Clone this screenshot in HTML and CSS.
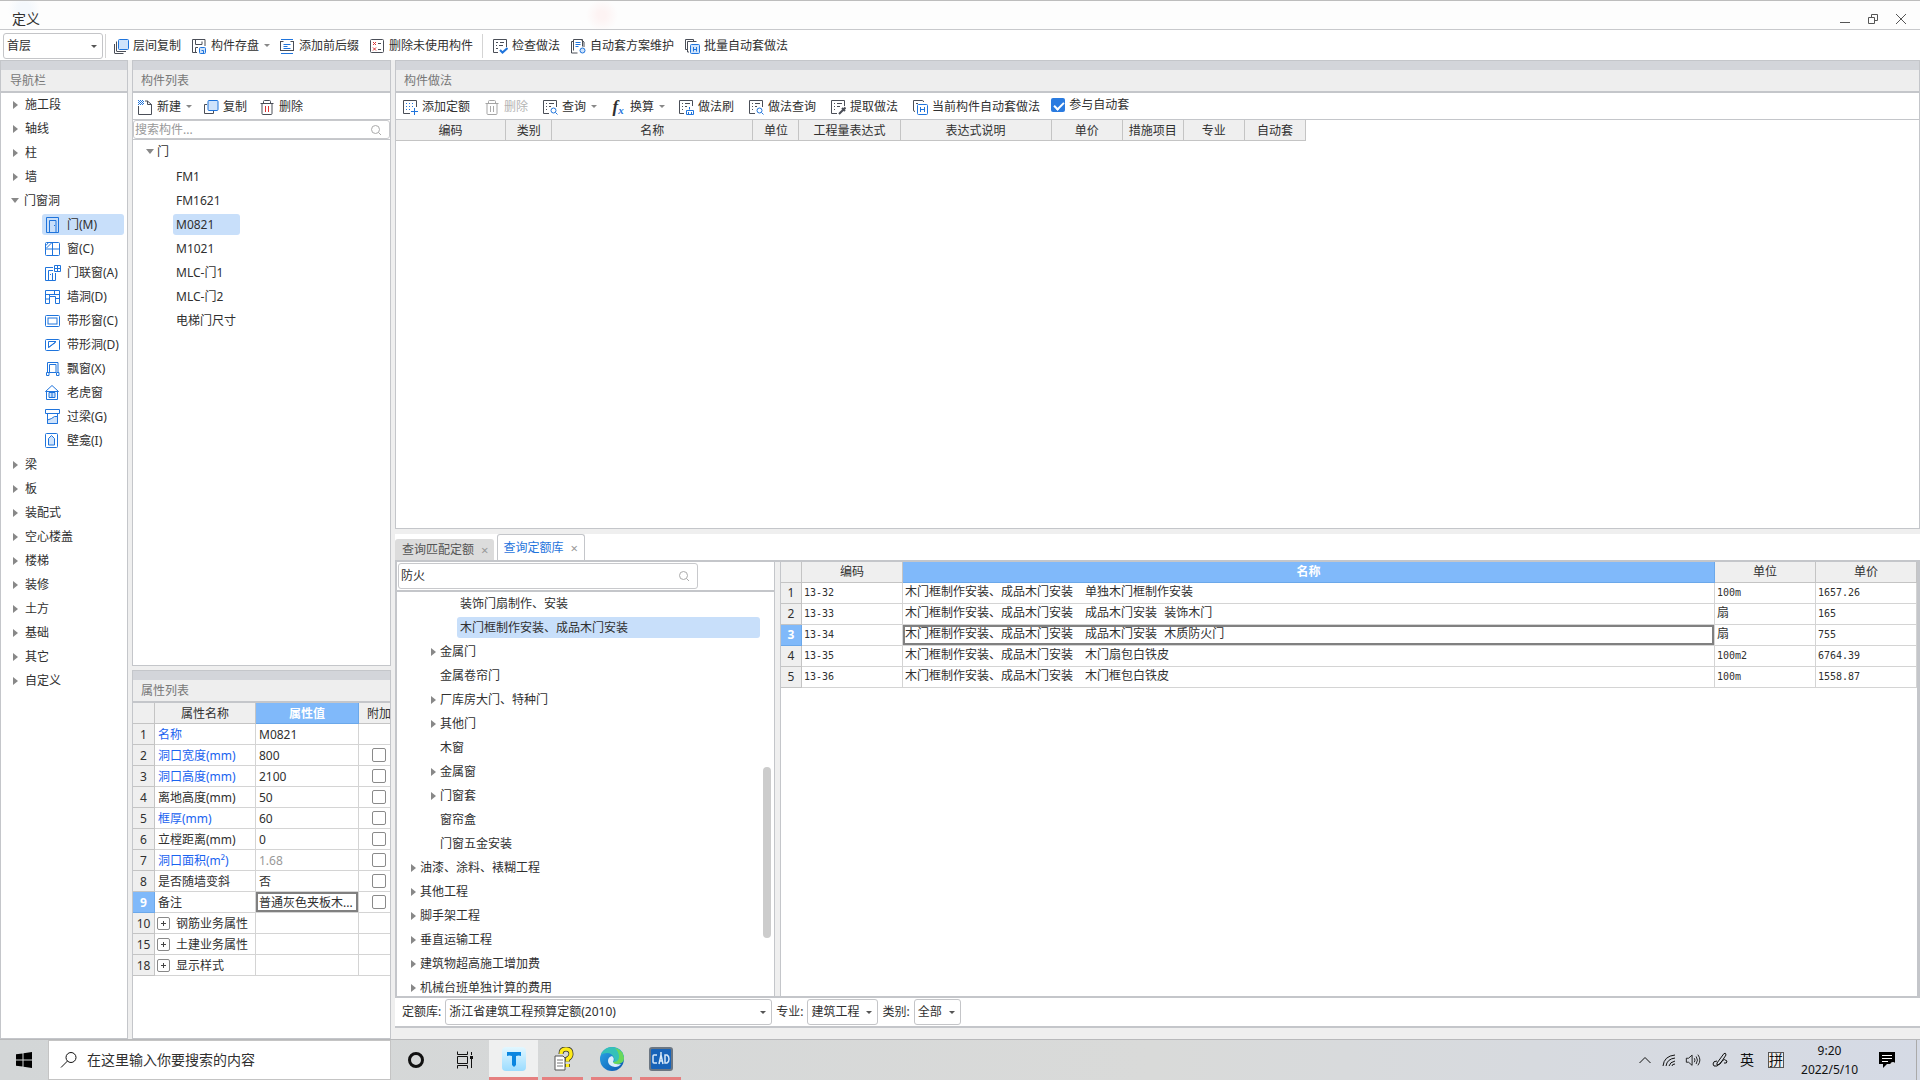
FILE: index.html
```html
<!DOCTYPE html>
<html lang="zh-CN">
<head>
<meta charset="utf-8">
<title>定义</title>
<link rel="stylesheet" href="styles.css">
</head>
<body>
<svg class="sprite" aria-hidden="true">
  <symbol id="i-copy-floor" viewBox="0 0 16 16"><rect class="b f" x="5.5" y="1.5" width="10" height="10" rx="1"/><path class="d" d="M3.5 3.5v9.500q0 .5.5.5h9M1.500 6v9q0 .5.5.5h8.500"/></symbol>
  <symbol id="i-save" viewBox="0 0 16 16"><path class="d" d="M6 14.500H1.500v-13h12.500V8M4.500 1.500v5h6.500v-3M4.500 14V9.500H7"/><rect class="b f" x="8.500" y="9.500" width="6" height="6" rx="1"/><path class="b" d="M10.500 12.500h2v3"/></symbol>
  <symbol id="i-affix" viewBox="0 0 16 16"><path class="d" d="M1.500 3v10M14.500 3v10M1.500 3.500h3M11.500 3.500h3M1.500 12.500h13"/><path class="b" d="M2 1.500h12M2 15.500h12M4.500 6.500h7M4.500 8.500h4M4.500 10.500h7"/></symbol>
  <symbol id="i-unused" viewBox="0 0 16 16"><rect class="d" x="1.500" y="1.500" width="13" height="13" rx="1"/><path class="r" d="M4 4l3 3M7 4L4 7M4 9.500l3 3M7 9.500l-3 3"/><path class="d" d="M9 5.500h3M9 11.500h3"/></symbol>
  <symbol id="i-check" viewBox="0 0 16 16"><path class="d" d="M6 14.500H1.500v-13h13V9M4 4.500h2M8 4.500h4M4 7.500h1M7 7.500h4M4 10.500h2"/><path class="b w" d="M8 12l2.500 2.500L15.500 10"/></symbol>
  <symbol id="i-auto" viewBox="0 0 16 16"><path class="d" d="M3.500 12.500v-11h9v7M3.500 3.500h-2v11.500h6M11 1.500l3 2.500v5"/><path class="b" d="M5.500 4.500h5M5.500 6.500h5M5.500 8.500h3"/><circle class="b f" cx="12.500" cy="12.500" r="2.500"/></symbol>
  <symbol id="i-batch" viewBox="0 0 16 16"><path class="d" d="M3 11.500H1.500v-10h8V3M5 14H3.500V3.500h9"/><rect class="b f" x="6.500" y="6.500" width="9" height="9" rx="1"/><path class="b" d="M9.500 9v4.500M12.500 9v4.500M9.500 11.500h3"/></symbol>
  <symbol id="i-new" viewBox="0 0 16 16"><path class="d" d="M1.500 7v8.500h13V5.500L10.500 2H8M10.500 2v3.500h4"/><path class="b" stroke-dasharray="1 1" d="M1 1.500h5M2 2.500h5M1 3.500h5M2 4.500h5M1 5.500h5"/></symbol>
  <symbol id="i-copy" viewBox="0 0 16 16"><path class="d" d="M4 5.500H1.500v9h9V12"/><rect class="b f" x="5" y="1.500" width="10" height="10" rx="1"/></symbol>
  <symbol id="i-trash" viewBox="0 0 16 16"><path class="d" d="M1.500 4.500h13M4.500 4V2.500q0-1 1-1h5q1 0 1 1V4M3 5v9.500q0 1 1 1h8q1 0 1-1V5"/><path class="r t" d="M6.500 7v6M9.500 7v6"/></symbol>
  <symbol id="i-add" viewBox="0 0 16 16"><path class="d" d="M8 14.500H1.500v-13h13V8"/><path class="b" stroke-dasharray="1 2" d="M4 4.500h8M4 7.500h8M4 10.500h4"/><path class="b" d="M12.500 9v7M9 12.500h7"/></symbol>
  <symbol id="i-query" viewBox="0 0 16 16"><path class="d" d="M7 14.500H1.500v-13h13V8M4 4.500h1M7 4.500h5M4 7.500h1M7 7.500h2M4 10.500h1"/><circle class="b" cx="11.500" cy="11.500" r="2.500"/><path class="b" d="M13.500 13.500l2 2"/></symbol>
  <symbol id="i-brush" viewBox="0 0 16 16"><path class="d" d="M6 14.500H1.500v-13h13V7M4 4.500h1M7 4.500h5M4 7.500h1M7 7.500h2M4 10.500h1"/><path class="b" d="M11.500 8v2.500M8.500 11.500h7v4h-7zM10.500 13v2M13.500 13v2"/></symbol>
  <symbol id="i-extract" viewBox="0 0 16 16"><path class="d" d="M7 14.500H1.500v-13h13V7M4 4.500h1M7 4.500h5M4 7.500h1M7 7.500h3M4 10.500h1"/><path class="d w" d="M9 15l4-4M12 9l3 3M13 11l2.500-2.500"/></symbol>
  <symbol id="i-current" viewBox="0 0 16 16"><path class="d" d="M3 12.500q-1.500 0-1.500-1.500V1.500h9q1 0 1 1.500M4 4.500h2"/><rect class="b" x="5.500" y="5.500" width="10" height="10" rx="1"/><path class="b" d="M8.500 8v5M12.500 8v5M8.500 10.500h4"/></symbol>
  <symbol id="i-search" viewBox="0 0 12 12"><circle cx="5.500" cy="5.500" r="4"/><path d="M8.500 8.500l2.500 2.500"/></symbol>
  <symbol id="n-door" viewBox="0 0 16 16"><path class="b" d="M1.500 15.500v-15h12v15zM4.500 15V3.500h6.500V15"/><path class="b" d="M9 8.500h1"/></symbol>
  <symbol id="n-window" viewBox="0 0 16 16"><rect class="b" x=".5" y="1.500" width="14" height="13" rx="1"/><path class="b" d="M7.500 1.500v13M.5 8h14M1.500 7l5-5M1 4.500l2.500-3"/></symbol>
  <symbol id="n-doorwin" viewBox="0 0 16 16"><path class="b" d="M8 2.500H.5v13h10V8M3.500 15V5.500H8M7.500 15V8M5 9.500h1M9.500.5h6v6h-6zM12.500.5v6M9.500 3.500h6"/></symbol>
  <symbol id="n-hole" viewBox="0 0 16 16"><path class="b" d="M.5 14.500v-13h14v13h-4v-7h-6v7zM.5 5.500h14M9.500 1.500v4M.5 10h4M10.500 9.500h4M4.500 5.500v2"/></symbol>
  <symbol id="n-strip" viewBox="0 0 16 16"><rect class="b" x=".5" y="2.500" width="14" height="11" rx="1"/><rect class="b" x="3" y="5" width="9" height="6"/></symbol>
  <symbol id="n-striphole" viewBox="0 0 16 16"><rect class="b" x=".5" y="2.500" width="14" height="11" rx="1"/><path class="b" d="M3.500 10.500v-6H11zM3.500 10.500l7-5"/></symbol>
  <symbol id="n-bay" viewBox="0 0 16 16"><path class="b" d="M2.500 11.500v-10h10.500v10M4.500 11V3.500h6.500V11M1.500 11.500h2.500v3H1.500zM11.500 11.500h2.500v3h-2.500zM4 11.500h7"/></symbol>
  <symbol id="n-dormer" viewBox="0 0 16 16"><path class="b" d="M.5 6.500L7 .5l6.500 6zM1.500 7v7.500h11V7"/><path class="b f" d="M4 7.500h6v5H4zM7 7.500v5"/></symbol>
  <symbol id="n-lintel" viewBox="0 0 16 16"><path class="b" d="M.5.5h14v4H.5zM2.500 4.500v10h10v-10"/><path class="b f" d="M2.500 11q4-1 7-3.500h3v7h-10z"/></symbol>
  <symbol id="n-niche" viewBox="0 0 16 16"><rect class="b" x=".5" y=".5" width="12" height="14" rx="1"/><path class="b f" d="M3.500 12V5.500l3-3 3 3V12z"/></symbol>
</svg>

<header class="titlebar">
  <h1>定义</h1>
  <div class="winbtns">
    <button aria-label="最小化"><svg viewBox="0 0 12 12"><path d="M1 9.500h10"/></svg></button>
    <button aria-label="还原"><svg viewBox="0 0 12 12"><path d="M1.500 4.500h6v6h-6zM4.500 4V1.500h6v6H8"/></svg></button>
    <button aria-label="关闭"><svg viewBox="0 0 12 12"><path d="M1 1l10 10M11 1L1 11"/></svg></button>
  </div>
</header>

<div class="toolbar main-tools">
  <span class="combo floor"><select aria-label="楼层"><option>首层</option></select></span>
  <i class="sep"></i>
  <button class="tool"><svg><use href="#i-copy-floor"/></svg>层间复制</button>
  <button class="tool drop"><svg><use href="#i-save"/></svg>构件存盘</button>
  <button class="tool"><svg><use href="#i-affix"/></svg>添加前后缀</button>
  <button class="tool"><svg><use href="#i-unused"/></svg>删除未使用构件</button>
  <i class="sep"></i>
  <button class="tool"><svg><use href="#i-check"/></svg>检查做法</button>
  <button class="tool"><svg><use href="#i-auto"/></svg>自动套方案维护</button>
  <button class="tool"><svg><use href="#i-batch"/></svg>批量自动套做法</button>
</div>

<main class="workspace">
  <nav class="panel nav">
    <h2>导航栏</h2>
    <ul class="tree">
      <li class="shut">施工段</li>
      <li class="shut">轴线</li>
      <li class="shut">柱</li>
      <li class="shut">墙</li>
      <li class="open">门窗洞
        <ul>
          <li class="on"><svg><use href="#n-door"/></svg>门(M)</li>
          <li><svg><use href="#n-window"/></svg>窗(C)</li>
          <li><svg><use href="#n-doorwin"/></svg>门联窗(A)</li>
          <li><svg><use href="#n-hole"/></svg>墙洞(D)</li>
          <li><svg><use href="#n-strip"/></svg>带形窗(C)</li>
          <li><svg><use href="#n-striphole"/></svg>带形洞(D)</li>
          <li><svg><use href="#n-bay"/></svg>飘窗(X)</li>
          <li><svg><use href="#n-dormer"/></svg>老虎窗</li>
          <li><svg><use href="#n-lintel"/></svg>过梁(G)</li>
          <li><svg><use href="#n-niche"/></svg>壁龛(I)</li>
        </ul>
      </li>
      <li class="shut">梁</li>
      <li class="shut">板</li>
      <li class="shut">装配式</li>
      <li class="shut">空心楼盖</li>
      <li class="shut">楼梯</li>
      <li class="shut">装修</li>
      <li class="shut">土方</li>
      <li class="shut">基础</li>
      <li class="shut">其它</li>
      <li class="shut">自定义</li>
    </ul>
  </nav>

  <div class="middle">
    <section class="panel components">
      <h2>构件列表</h2>
      <div class="toolbar list-tools">
        <button class="tool drop"><svg><use href="#i-new"/></svg>新建</button>
        <button class="tool"><svg><use href="#i-copy"/></svg>复制</button>
        <button class="tool"><svg><use href="#i-trash"/></svg>删除</button>
      </div>
      <label class="search"><input type="text" placeholder="搜索构件..." aria-label="搜索构件"><svg><use href="#i-search"/></svg></label>
      <ul class="tree">
        <li class="open">门
          <ul>
            <li><span>FM1</span></li>
            <li><span>FM1621</span></li>
            <li><span class="on">M0821</span></li>
            <li><span>M1021</span></li>
            <li><span>MLC-门1</span></li>
            <li><span>MLC-门2</span></li>
            <li><span>电梯门尺寸</span></li>
          </ul>
        </li>
      </ul>
    </section>

    <section class="panel properties">
      <h2>属性列表</h2>
      <div class="clip">
      <table class="grid props">
        <colgroup><col class="c-num"><col class="c-name"><col class="c-val"><col class="c-add"></colgroup>
        <thead><tr><th></th><th>属性名称</th><th class="hot">属性值</th><th>附加</th></tr></thead>
        <tbody>
          <tr><th>1</th><td class="key">名称</td><td>M0821</td><td></td></tr>
          <tr><th>2</th><td class="key">洞口宽度(mm)</td><td>800</td><td><input type="checkbox" aria-label="附加 洞口宽度"></td></tr>
          <tr><th>3</th><td class="key">洞口高度(mm)</td><td>2100</td><td><input type="checkbox" aria-label="附加 洞口高度"></td></tr>
          <tr><th>4</th><td>离地高度(mm)</td><td>50</td><td><input type="checkbox" aria-label="附加 离地高度"></td></tr>
          <tr><th>5</th><td class="key">框厚(mm)</td><td>60</td><td><input type="checkbox" aria-label="附加 框厚"></td></tr>
          <tr><th>6</th><td>立樘距离(mm)</td><td>0</td><td><input type="checkbox" aria-label="附加 立樘距离"></td></tr>
          <tr><th>7</th><td class="key">洞口面积(m²)</td><td class="mute">1.68</td><td><input type="checkbox" aria-label="附加 洞口面积"></td></tr>
          <tr><th>8</th><td>是否随墙变斜</td><td>否</td><td><input type="checkbox" aria-label="附加 是否随墙变斜"></td></tr>
          <tr><th class="hot">9</th><td>备注</td><td class="focus">普通灰色夹板木...</td><td><input type="checkbox" aria-label="附加 备注"></td></tr>
          <tr><th>10</th><td><button class="plus" aria-label="展开"></button>钢筋业务属性</td><td></td><td></td></tr>
          <tr><th>15</th><td><button class="plus" aria-label="展开"></button>土建业务属性</td><td></td><td></td></tr>
          <tr><th>18</th><td><button class="plus" aria-label="展开"></button>显示样式</td><td></td><td></td></tr>
        </tbody>
      </table>
      </div>
    </section>
  </div>

  <div class="right">
    <section class="panel methods">
      <h2>构件做法</h2>
      <div class="toolbar method-tools">
        <button class="tool"><svg><use href="#i-add"/></svg>添加定额</button>
        <button class="tool" disabled><svg><use href="#i-trash"/></svg>删除</button>
        <button class="tool drop"><svg><use href="#i-query"/></svg>查询</button>
        <button class="tool drop"><span class="fx">f<sub>x</sub></span>换算</button>
        <button class="tool"><svg><use href="#i-brush"/></svg>做法刷</button>
        <button class="tool"><svg><use href="#i-query"/></svg>做法查询</button>
        <button class="tool"><svg><use href="#i-extract"/></svg>提取做法</button>
        <button class="tool"><svg><use href="#i-current"/></svg>当前构件自动套做法</button>
        <label class="join"><input type="checkbox" checked>参与自动套</label>
      </div>
      <table class="grid methods-grid">
        <colgroup><col class="m1"><col class="m2"><col class="m3"><col class="m2"><col class="m4"><col class="m5"><col class="m6"><col class="m7"><col class="m7"><col class="m7"></colgroup>
        <thead><tr><th>编码</th><th>类别</th><th>名称</th><th>单位</th><th>工程量表达式</th><th>表达式说明</th><th>单价</th><th>措施项目</th><th>专业</th><th>自动套</th></tr></thead>
      </table>
    </section>

    <section class="query">
      <div class="tabs">
        <button class="tab">查询匹配定额<b>×</b></button>
        <button class="tab active">查询定额库<b>×</b></button>
      </div>
      <div class="query-body">
        <div class="library">
          <div class="library-search"><label class="search"><input type="text" value="防火" aria-label="搜索定额"><svg><use href="#i-search"/></svg></label></div>
          <div class="library-tree">
            <ul class="tree">
              <li class="l3">装饰门扇制作、安装</li>
              <li class="l3 on">木门框制作安装、成品木门安装</li>
              <li class="l2 shut">金属门</li>
              <li class="l2">金属卷帘门</li>
              <li class="l2 shut">厂库房大门、特种门</li>
              <li class="l2 shut">其他门</li>
              <li class="l2">木窗</li>
              <li class="l2 shut">金属窗</li>
              <li class="l2 shut">门窗套</li>
              <li class="l2">窗帘盒</li>
              <li class="l2">门窗五金安装</li>
              <li class="l1 shut">油漆、涂料、裱糊工程</li>
              <li class="l1 shut">其他工程</li>
              <li class="l1 shut">脚手架工程</li>
              <li class="l1 shut">垂直运输工程</li>
              <li class="l1 shut">建筑物超高施工增加费</li>
              <li class="l1 shut">机械台班单独计算的费用</li>
            </ul>
            <div class="scroll"><i></i></div>
          </div>
        </div>
        <div class="results">
          <table class="grid results-grid">
            <colgroup><col class="q1"><col class="q2"><col><col class="q2"><col class="q2"></colgroup>
            <thead><tr><th></th><th>编码</th><th class="hot">名称</th><th>单位</th><th>单价</th></tr></thead>
            <tbody>
              <tr><th>1</th><td>13-32</td><td class="cn">木门框制作安装、成品木门安装　单独木门框制作安装</td><td>100m</td><td>1657.26</td></tr>
              <tr><th>2</th><td>13-33</td><td class="cn">木门框制作安装、成品木门安装　成品木门安装 装饰木门</td><td class="cn">扇</td><td>165</td></tr>
              <tr><th class="hot">3</th><td>13-34</td><td class="cn focus">木门框制作安装、成品木门安装　成品木门安装 木质防火门</td><td class="cn">扇</td><td>755</td></tr>
              <tr><th>4</th><td>13-35</td><td class="cn">木门框制作安装、成品木门安装　木门扇包白铁皮</td><td>100m2</td><td>6764.39</td></tr>
              <tr><th>5</th><td>13-36</td><td class="cn">木门框制作安装、成品木门安装　木门框包白铁皮</td><td>100m</td><td>1558.87</td></tr>
            </tbody>
          </table>
        </div>
      </div>
      <div class="filters">
        <label for="lib">定额库:</label><span class="combo lib"><select id="lib"><option>浙江省建筑工程预算定额(2010)</option></select></span>
        <label for="major">专业:</label><span class="combo major"><select id="major"><option>建筑工程</option></select></span>
        <label for="kind">类别:</label><span class="combo kind"><select id="kind"><option>全部</option></select></span>
      </div>
    </section>
  </div>
</main>

<footer class="taskbar">
  <button class="start" aria-label="开始"><svg viewBox="0 0 16 16"><path d="M0 2.300L6.500 1.400v6.100H0zM7.500 1.200L16 0v7.500H7.500zM0 8.500h6.500v6.100L0 13.700zM7.500 8.500H16V16l-8.500-1.200z"/></svg></button>
  <label class="tasksearch"><svg viewBox="0 0 18 18"><circle cx="11" cy="6.500" r="5"/><path d="M7.500 10L1 16.500"/></svg><input type="text" placeholder="在这里输入你要搜索的内容" aria-label="搜索"></label>
  <div class="apps">
    <button aria-label="Cortana"><svg viewBox="0 0 24 24"><circle class="ink thick" cx="12" cy="12" r="6.500"/></svg></button>
    <button aria-label="任务视图"><svg viewBox="0 0 24 24"><path class="ink" d="M4.500 3.500v3h10v-3M4.500 20.500v-3h10v3M4.500 8.500h10v7h-10zM18.500 4v3M18.500 11v9"/><path class="ink thick" d="M18.500 8v3"/></svg></button>
    <button class="run front" aria-label="T"><svg viewBox="0 0 24 24"><defs><linearGradient id="gt" x1="0" y1="0" x2="0" y2="1"><stop offset="0" stop-color="#e2f7ff"/><stop offset="1" stop-color="#9bdcff"/></linearGradient><linearGradient id="ge" x1="0" y1="0" x2="1" y2="1"><stop offset="0" stop-color="#2aa9e8"/><stop offset="1" stop-color="#0d55b0"/></linearGradient></defs><rect width="24" height="24" rx="4" fill="url(#gt)"/><path d="M5 5h14v4q-2-1-5 0v9l-2 2-2-2V9q-3-1-5 0z" fill="#0a86e0"/></svg></button>
    <button class="run" aria-label="帮助"><svg viewBox="0 0 24 24"><path d="M4 9h8l2 2v12H4z" fill="#fff" stroke="#555"/><path d="M6 13h6M6 16h6M6 19h6" stroke="#777"/><path d="M10 7q0-5 5-5t5 5q0 3-3.500 5v2.500M16.500 17v3" fill="none" stroke="#333" stroke-width="5"/><path d="M10 7q0-5 5-5t5 5q0 3-3.500 5v2.500M16.500 17v3" fill="none" stroke="#ffec1a" stroke-width="3.500"/></svg></button>
    <button class="run" aria-label="Edge"><svg viewBox="0 0 24 24"><circle cx="12" cy="12" r="12" fill="url(#ge)"/><path d="M1 8Q4 0 12 0q10 0 12 10 0 7-8 7-3 0-3-2 2-1 1-4-2-5-7-5-4 0-6 2z" fill="#35c1b8"/><path d="M15 1q8 2 9 10 0 6-8 6-3 0-3-2 6 0 6-5 0-5-4-9z" fill="#6ad85a"/><path d="M8 14q0-4 4-5 3 2 1 6 1 3 8 2-2 3-6 3-7-1-7-6z" fill="#dceefb"/></svg></button>
    <button class="run" aria-label="CAD"><svg viewBox="0 0 24 24"><rect x="1" y="1" width="22" height="22" rx="2" fill="#1763b8" stroke="#6b7682" stroke-width="2"/><path d="M8 8H5q-1 0-1 1v6q0 1 1 1h3M10 17l2-9 2 9M10 14h4M12 8V5M16 8h2q2 1 2 4t-2 4h-2z" fill="none" stroke="#d6e8f8" stroke-width="1.500"/></svg></button>
  </div>
  <div class="tray">
    <svg viewBox="0 0 16 16"><path d="M2.500 11L8 5.500l5.500 5.500"/></svg>
    <svg viewBox="0 0 16 16"><path d="M2 14Q3 4 14 3M5 14q1-7 9-8M8 14q1-4 6-5M11 14q0-2 3-2"/></svg>
    <svg viewBox="0 0 18 16"><path d="M1.500 6v4.500h2.500L8 14V2.500L4 6zM10.500 6q1.500 2 0 4.500M12.500 4q3 4 0 8.500M14.500 2q4.500 6 0 12"/></svg>
    <svg class="pen" viewBox="0 0 16 16"><path d="M5 11L12 1.500q2-1 2 1.500L8 12l-3 1zM5 9q-4 0-4 3t4 2q3-2 5-5t5 0q0 3-3 2"/></svg>
    <span class="lang">英</span>
    <span class="ime">拼</span>
    <time>9:20<br>2022/5/10</time>
    <svg class="note" viewBox="0 0 18 18"><path fill="#000" d="M1 1h16v12H9l-4 4v-4H1z"/><path stroke="#fff" d="M4 4.500h10M4 7.500h10M4 10.500h6"/><path d="M12 15q0-4 3-4t2 4z" fill="#d8dbe2"/></svg>
    <i class="peek"></i>
  </div>
</footer>
</body>
</html>
```

FILE: styles.css
```css
* { box-sizing: border-box; }
html { height: 100%; }
body {
  margin: 0;
  min-height: 100%;
  height: 100vh;
  display: flex;
  flex-direction: column;
  background: #efefef;
  color: #303030;
  font: 12px/20px "Noto Sans", "Noto Sans CJK SC", sans-serif;
  overflow: hidden;
}
button, input, select { font: inherit; color: inherit; margin: 0; padding: 0; border: 0; background: none; }
ul { list-style: none; margin: 0; padding: 0; }
h1, h2 { margin: 0; font-size: 12px; font-weight: 400; }
.sprite { position: absolute; width: 0; height: 0; }
symbol path, symbol rect, symbol circle { fill: none; }
.d { stroke: #4a4e57; }
.b { stroke: #1f74dc; }
.r { stroke: #d33; }
symbol .f { fill: #cfe3fb; }
.w { stroke-width: 2; }

.titlebar {
  flex: none;
  height: 30px;
  border-top: 1px solid #bdbdbd;
  border-bottom: 1px solid #c8c9cc;
  display: flex;
  justify-content: space-between;
  align-items: center;
  padding: 8px 13px 0 12px;
  background:
    radial-gradient(circle at 602px 14px, #fdf3f3 0 4px, transparent 16px),
    radial-gradient(ellipse at 198px 28px, #f3f8fc 0 12px, transparent 28px),
    radial-gradient(circle at 24px 8px, #f4f8fc 0 6px, transparent 16px),
    #fdfdfd;
}
.titlebar h1 { font-size: 14px; }
.winbtns { display: flex; gap: 16px; }
.winbtns button { display: flex; }
.winbtns svg { width: 12px; height: 12px; fill: none; stroke: #555; }

.toolbar { display: flex; align-items: center; background: #fff; flex: none; }
.tool { display: flex; align-items: center; gap: 4px; white-space: nowrap; line-height: 20px; }
.tool svg { width: 16px; height: 16px; flex: none; }
.tool.drop::after { content: ""; border: 3px solid transparent; border-top-color: #888; border-bottom: 0; margin: 0 -1px 0 1px; }
.tool:disabled { color: #b4b4b4; }
.tool:disabled svg { opacity: .5; filter: grayscale(1); }
.sep { width: 1px; height: 24px; margin: 0 -1px; background: #d4d4d4; }
.main-tools { height: 30px; gap: 10px; padding: 1px 3px 0; }
.main-tools .floor { margin-right: -7px; }
.main-tools .floor + .sep { margin-right: -3px; }

.combo { position: relative; display: flex; }
.combo select { appearance: none; width: 100%; height: 26px; border: 1px solid #c4c5c8; border-radius: 3px; padding: 0 16px 0 3px; background: #fff; }
.combo::after { content: ""; position: absolute; right: 6px; top: 12px; border: 3px solid transparent; border-top-color: #555; border-bottom: 0; }
.floor { width: 100px; }

.workspace {
  flex: 1;
  min-height: 0;
  display: grid;
  grid-template-columns: 128px 259px minmax(0, 1fr);
  gap: 4px;
}
.workspace > * { min-height: 0; }
.panel { display: flex; flex-direction: column; background: #fff; border: 1px solid #c4c6ca; overflow: hidden; }
.panel h2 {
  flex: none;
  height: 32px;
  border-top: 9px solid #d3d5da;
  border-bottom: 2px solid #c4c6ca;
  background: #eee;
  padding-left: 8px;
  line-height: 22px;
  color: #777;
}
.nav h2 { padding-left: 9px; }

.tree li { line-height: 24px; white-space: nowrap; position: relative; }
.shut::before, .open::before { content: ""; display: inline-block; margin-right: 7px; }
.shut::before { border: 4px solid transparent; border-left: 5px solid #888; border-right: 0; }
.open::before { border: 4px solid transparent; border-top: 5px solid #888; border-bottom: 0; margin-right: 5px; vertical-align: 2px; }
.nav > .tree > li { padding-left: 12px; }
.nav > .tree > .open { padding-left: 10px; }
.nav li ul { margin: 0 3px -1px 31px; }
.nav li li { height: 21px; margin: 1px 0 3px; line-height: 21px; display: flex; align-items: center; gap: 6px; padding-left: 3px; }
.nav li svg { width: 16px; height: 16px; flex: none; }
.on { background: #c8dffa; border-radius: 3px; }

.middle { display: flex; flex-direction: column; gap: 4px; }
.components { flex: 606 1 0; min-height: 0; }
.properties { flex: 368 1 0; min-height: 0; }
.list-tools { height: 27px; padding: 1px 4px 0; gap: 12px; border-bottom: 1px solid #c4c6ca; }
.search { display: flex; align-items: center; border: 1px solid #c8c9cc; border-radius: 3px; background: #fff; }
.search input { flex: 1; min-width: 0; padding-left: 2px; outline: 0; }
.components .search input { padding-left: 1px; }
.search input::placeholder { color: #999; }
.search svg { width: 12px; height: 12px; margin-right: 7px; fill: none; stroke: #aaa; }
.components .search { height: 19px; flex: none; }
.components > .tree { border-top: 1px solid #c4c6ca; padding-left: 13px; }
.components .open::before { margin-right: 3px; }
.components li li { padding-left: 27px; height: 24px; display: flex; align-items: center; }
.components li span { padding: 0 3px; line-height: 21px; }
.components li .on { padding-right: 26px; }

.grid { border-collapse: separate; border-spacing: 0; table-layout: fixed; }
.grid th, .grid td { height: 21px; padding: 0 4px; border: solid #d4d4d4; border-width: 0 1px 1px 0; line-height: 20px; white-space: nowrap; overflow: hidden; text-align: left; }
.grid th { background: #efefef; font-weight: 400; text-align: center; border-color: #c4c4c4; padding: 0; }
.grid .hot { background: #80b9fa; color: #fff; font-weight: 700; border-color: #6ba8ea; }
.grid .focus { box-shadow: inset 0 0 0 2px #808080; }
.props th, .methods-grid th { line-height: 18px; padding-top: 2px; }
.clip { overflow: hidden; }
.props { width: 267px; }
.c-num { width: 22px; } .c-name { width: 101px; } .c-val { width: 103px; } .c-add { width: 41px; }
.props td { padding: 2px 3px 0; line-height: 18px; }
.key { color: #1a63f0; }
.mute { color: #999; }
.props input { appearance: none; display: block; width: 14px; height: 14px; border: 1px solid #8a8a8a; border-radius: 2px; margin: 0 0 2px 10px; background: #fff; }
.plus { width: 13px; height: 13px; border: 1px solid #888; border-radius: 2px; margin: 0 6px 0 -1px; vertical-align: -1px; background: linear-gradient(#444, #444) center / 5px 1px no-repeat, linear-gradient(#444, #444) center / 1px 5px no-repeat; }

.right { display: flex; flex-direction: column; gap: 5px; padding-bottom: 11px; min-width: 0; }
.methods { flex: 469 1 0; min-height: 0; }
.method-tools { height: 27px; padding: 1px 6px 0; gap: 14px; border-bottom: 1px solid #c4c6ca; }
.fx { width: 16px; font: italic 700 17px/20px "Liberation Serif", serif; }
.fx sub { font-size: 11px; color: #1f74dc; vertical-align: -2px; line-height: 0; }
.join { display: flex; align-items: center; gap: 4px; margin-left: -3px; padding-bottom: 3px; }
.join input { appearance: none; width: 14px; height: 14px; background: #2a7be0; border-radius: 2px; position: relative; }
.join input::after { content: ""; position: absolute; left: 5px; top: 2px; width: 4px; height: 8px; border: solid #fff; border-width: 0 2px 2px 0; transform: rotate(45deg); }
.methods-grid { width: 910px; flex: none; }
.m1 { width: 110px; } .m2 { width: 46px; } .m3 { width: 201px; } .m4 { width: 101px; } .m5 { width: 151px; } .m6 { width: 71px; } .m7 { width: 61px; }

.query { flex: 494 1 0; min-height: 0; display: flex; flex-direction: column; background: #fff; border-bottom: 2px solid #c4c6ca; }
.tabs { display: flex; align-items: flex-end; gap: 3px; height: 28px; flex: none; border-bottom: 2px solid #c4c6ca; }
.tab { height: 21px; padding: 0 6px 0 7px; background: #dcdcdc; color: #555; border-radius: 3px 3px 0 0; display: flex; align-items: center; gap: 7px; }
.tab b { font-weight: 400; color: #999; font-size: 13px; }
.tab.active { height: 26px; background: #fff; color: #1f74dc; border: 1px solid #c4c6ca; border-bottom: 0; padding: 0 6px 0 5px; }
.query-body { flex: 1; min-height: 0; display: grid; grid-template-columns: 380px minmax(0, 1fr); gap: 5px; background: #efefef; }
.library, .results { background: #fff; min-height: 0; border-left: 1px solid #c4c6ca; border-right: 1px solid #c4c6ca; overflow: hidden; }
.library { display: flex; flex-direction: column; border-left-width: 2px; }
.results { border-right-width: 3px; }
.library-search { padding: 1px; border-bottom: 2px solid #c4c6ca; flex: none; }
.library-search .search { width: 300px; height: 26px; }
.library-tree { flex: 1; min-height: 0; display: flex; overflow: hidden; }
.library-tree .tree { flex: 1; }
.library-tree .l1 { padding-left: 23px; }
.library-tree .l2 { padding-left: 43px; }
.library-tree .l3 { padding-left: 3px; margin-left: 60px; }
.library-tree .shut::before { margin: 0 4px 0 -9px; }
.library-tree .on { line-height: 21px; margin-top: 1px; margin-bottom: 2px; }
.scroll { width: 14px; padding: 0 3px; display: flex; flex-direction: column; }
.scroll::before { content: ""; flex: 175; }
.scroll::after { content: ""; flex: 58; }
.scroll i { flex: 172; border-radius: 4px; background: #ccc; }
.results-grid { width: 100%; }
.q1 { width: 21px; } .q2 { width: 101px; }
.results-grid td { font: 10px/20px "DejaVu Sans Mono", "Noto Sans CJK SC", monospace; padding: 0 2px; }
.results-grid .cn { font: 12px/20px "Liberation Mono", "Noto Sans CJK SC", monospace; }
.filters { height: 30px; flex: none; display: flex; align-items: center; gap: 4px; padding-left: 7px; border-top: 2px solid #c4c6ca; }
.lib { width: 327px; } .major { width: 71px; } .kind { width: 47px; }

.taskbar { flex: none; height: 41px; display: flex; border-top: 1px solid #b8b9bb; background: linear-gradient(90deg, #d3d6d7, #d9dad9 60%, #d5dae5); color: #111; }
.taskbar button { display: flex; align-items: center; justify-content: center; }
.start { width: 48px; }
.start svg { width: 16px; height: 16px; }
.tasksearch { width: 343px; display: flex; align-items: center; gap: 9px; padding-left: 11px; background: #fff; border: 1px solid #c4c4c4; }
.tasksearch svg { width: 18px; height: 18px; fill: none; stroke: #111; }
.tasksearch input { flex: 1; font-size: 14px; }
.tasksearch input::placeholder { color: #303030; }
.apps { display: flex; }
.apps button { width: 41px; margin: 0 4px; }
.apps button svg { width: 24px; height: 24px; }
.apps .run { border-bottom: 3px solid #e58080; }
.apps .front { width: 49px; margin: 0; background: #eff0f0; }
.ink { fill: none; stroke: #111; }
.thick { stroke-width: 3; }
.tray { margin-left: auto; display: flex; align-items: center; gap: 8px; }
.tray svg { width: 16px; height: 16px; fill: none; stroke: #111; }
.tray .pen { margin-left: 3px; }
.lang { font-size: 14px; margin-left: 4px; }
.ime { font-size: 14px; line-height: 14px; border: 1px solid #555; background: #eee; margin-left: 6px; }
.tray time { text-align: center; line-height: 19px; margin: 0 12px 0 9px; }
.tray .note { width: 18px; height: 18px; margin-right: 12px; stroke: none; }
.peek { width: 4px; align-self: stretch; border-left: 1px solid #aaa; }
```
